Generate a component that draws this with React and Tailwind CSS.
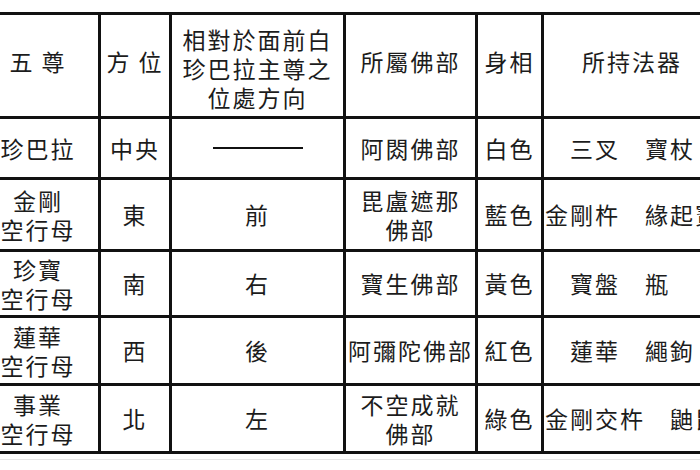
const rows = [
  { h: "h-[58px]", name: ["珍巴拉"], dir: "中央", rel: null, family: ["阿閦佛部"], body: "白色", item: "三叉　寶杖" },
  { h: "h-[69px]", name: ["金剛", "空行母"], dir: "東", rel: "前", family: ["毘盧遮那", "佛部"], body: "藍色", item: "金剛杵　緣起寶瓶", left: true },
  { h: "h-[63px]", name: ["珍寶", "空行母"], dir: "南", rel: "右", family: ["寶生佛部"], body: "黃色", item: "寶盤　瓶" },
  { h: "h-[65px]", name: ["蓮華", "空行母"], dir: "西", rel: "後", family: ["阿彌陀佛部"], body: "紅色", item: "蓮華　繩鉤" },
  { h: "h-[65px]", name: ["事業", "空行母"], dir: "北", rel: "左", family: ["不空成就", "佛部"], body: "綠色", item: "金剛交杵　鼬鼠", left: true },
];

function Cell({ children, className = "" }) {
  return (
    <div className={`bg-white flex flex-col items-center justify-center text-center ${className}`}>
      {children}
    </div>
  );
}

function Lines({ lines }) {
  return lines.map((l) => (
    <span key={l} className="block whitespace-nowrap">
      {l}
    </span>
  ));
}

export default function App() {
  return (
    <div
      className="w-[700px] h-[470px] overflow-hidden bg-white text-[#1c1c1c]"
      style={{ fontFamily: '"Noto Sans CJK TC", "Noto Sans CJK SC", sans-serif' }}
    >
      <div className="mt-[12px] ml-[-25px] w-[800px] bg-[#111] pt-[3px] pb-[3px] pl-[3px]">
        <div className="grid grid-cols-[120px_68px_171px_129px_63px_230px] gap-[3px] text-[23px] leading-[29px] tracking-[2px]">
          {/* header */}
          <Cell className="h-[101px] pb-[8px]">五 尊</Cell>
          <Cell className="h-[101px] pb-[8px]">方 位</Cell>
          <Cell className="h-[101px] pt-[6px]">
            <Lines lines={["相對於面前白", "珍巴拉主尊之", "位處方向"]} />
          </Cell>
          <Cell className="h-[101px] pb-[8px]">所屬佛部</Cell>
          <Cell className="h-[101px] pb-[8px]">身相</Cell>
          <Cell className="h-[101px] pb-[8px] items-start pl-[38px]">所持法器</Cell>

          {rows.map((r) => (
            <div key={r.dir} className="contents">
              <Cell className={r.h}>
                <Lines lines={r.name} />
              </Cell>
              <Cell className={r.h}>{r.dir}</Cell>
              <Cell className={r.h}>
                {r.rel ? r.rel : <span className="block w-[90px] h-[2px] bg-[#111]" />}
              </Cell>
              <Cell className={r.h}>
                <Lines lines={r.family} />
              </Cell>
              <Cell className={r.h}>{r.body}</Cell>
              <Cell className={`${r.h} items-start ${r.left ? "pl-[1px]" : "pl-[26px]"}`}>
                <span className="whitespace-nowrap">{r.item}</span>
              </Cell>
            </div>
          ))}
        </div>
      </div>
      <div className="mt-[5px] h-px w-full bg-[#e6e6e6]" />
    </div>
  );
}
